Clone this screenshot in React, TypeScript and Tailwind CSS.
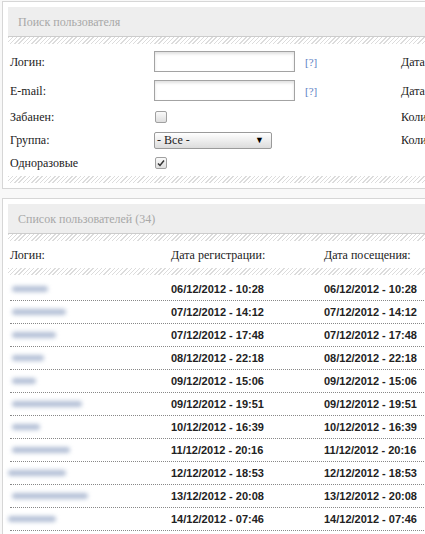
import React from 'react';

const hatch =
  'h-[7px] bg-[repeating-linear-gradient(135deg,#dcdcdc_0px,#dcdcdc_1px,#ffffff_1px,#ffffff_3px)]';

const users = [
  { w: 36, x: 2, reg: '06/12/2012 - 10:28', visit: '06/12/2012 - 10:28' },
  { w: 54, x: 2, reg: '07/12/2012 - 14:12', visit: '07/12/2012 - 14:12' },
  { w: 44, x: 2, reg: '07/12/2012 - 17:48', visit: '07/12/2012 - 17:48' },
  { w: 32, x: 2, reg: '08/12/2012 - 22:18', visit: '08/12/2012 - 22:18' },
  { w: 24, x: 2, reg: '09/12/2012 - 15:06', visit: '09/12/2012 - 15:06' },
  { w: 70, x: 2, reg: '09/12/2012 - 19:51', visit: '09/12/2012 - 19:51' },
  { w: 28, x: 2, reg: '10/12/2012 - 16:39', visit: '10/12/2012 - 16:39' },
  { w: 58, x: 2, reg: '11/12/2012 - 20:16', visit: '11/12/2012 - 20:16' },
  { w: 58, x: -2, reg: '12/12/2012 - 18:53', visit: '12/12/2012 - 18:53' },
  { w: 76, x: 2, reg: '13/12/2012 - 20:08', visit: '13/12/2012 - 20:08' },
  { w: 48, x: -2, reg: '14/12/2012 - 07:46', visit: '14/12/2012 - 07:46' },
];

const PanelHeader = ({ title }: { title: string }) => (
  <div className="h-[30px] bg-[#eeeeee] border-b border-[#cccccc] flex items-center pl-[10px] text-[12px] text-[#a8a8a8]">
    {title}
  </div>
);

const TextInput = () => (
  <div className="w-[141px] h-[21px] border border-[#a3a3a3] bg-white shadow-[inset_0_2px_3px_rgba(0,0,0,0.12)]" />
);

const Help = () => <span className="text-[#5a7ec4] text-[11px]">[?]</span>;

const App: React.FC = () => {
  return (
    <div className="w-[425px] h-[534px] overflow-hidden bg-[#f8f8f8] pt-[1px] pl-[2px] font-['Liberation_Serif',serif] text-[12px] text-[#222]">
      <div className="w-[700px]">
        {/* Search panel */}
        <div className="bg-white border border-[#d6d6d6] p-[5px]">
          <PanelHeader title="Поиск пользователя" />
          <div className={hatch} />

          <div className="pt-[3px] pl-[2px]">
            <div className="h-[29px] flex items-center">
              <div className="w-[144px]">Логин:</div>
              <div className="w-[151px]"><TextInput /></div>
              <div className="w-[96px]"><Help /></div>
              <div>Дата регистрации:</div>
            </div>
            <div className="h-[29px] flex items-center">
              <div className="w-[144px]">E-mail:</div>
              <div className="w-[151px]"><TextInput /></div>
              <div className="w-[96px]"><Help /></div>
              <div>Дата посещения:</div>
            </div>
            <div className="h-[23px] flex items-center">
              <div className="w-[144px]">Забанен:</div>
              <div className="w-[247px] pl-[1px]">
                <div className="w-[12px] h-[12px] rounded-[2px] border border-[#a0a0a0] bg-gradient-to-b from-[#fafafa] to-[#dedede]" />
              </div>
              <div>Количество комментариев:</div>
            </div>
            <div className="h-[24px] flex items-center">
              <div className="w-[144px]">Группа:</div>
              <div className="w-[247px]">
                <div className="w-[118px] h-[17px] rounded-[2px] border border-[#9a9a9a] bg-gradient-to-b from-white to-[#dcdcdc] flex items-center justify-between pl-[2px] pr-[7px]">
                  <span>- Все -</span>
                  <span className="text-[9px] text-black leading-none">▼</span>
                </div>
              </div>
              <div>Количество публикаций:</div>
            </div>
            <div className="h-[22px] flex items-center">
              <div className="w-[144px]">Одноразовые</div>
              <div className="pl-[1px]">
                <div className="w-[12px] h-[12px] rounded-[2px] border border-[#a0a0a0] bg-gradient-to-b from-[#fafafa] to-[#dedede] flex items-center justify-center">
                  <svg width="10" height="10" viewBox="0 0 10 10">
                    <path d="M2 5.5 L4 7.5 L8 2.5" fill="none" stroke="#333" strokeWidth="1.5" />
                  </svg>
                </div>
              </div>
            </div>
          </div>

          <div className={`mt-[2px] ${hatch}`} />
        </div>

        {/* Users list panel */}
        <div className="mt-[9px] bg-white border border-[#d6d6d6] p-[5px]">
          <PanelHeader title="Список пользователей (34)" />
          <div className={hatch} />

          <div className="h-[27px] flex items-center pl-[2px]">
            <div className="w-[161px]">Логин:</div>
            <div className="w-[153px]">Дата регистрации:</div>
            <div>Дата посещения:</div>
          </div>
          <div className={hatch} />

          <div className="pt-[3px] pl-[2px] font-['Liberation_Sans',sans-serif] font-bold text-[11px] text-[#222]">
            {users.map((u, i) => (
              <div key={i} className="h-[23px] flex items-center border-b border-dotted border-[#888]">
                <div className="w-[161px] flex items-center">
                  <div
                    className="h-[6px] rounded-full bg-[#b4c0d6] blur-[2px]"
                    style={{ width: u.w, marginLeft: u.x }}
                  />
                </div>
                <div className="w-[153px]">{u.reg}</div>
                <div>{u.visit}</div>
              </div>
            ))}
          </div>
        </div>
      </div>
    </div>
  );
};

export default App;
